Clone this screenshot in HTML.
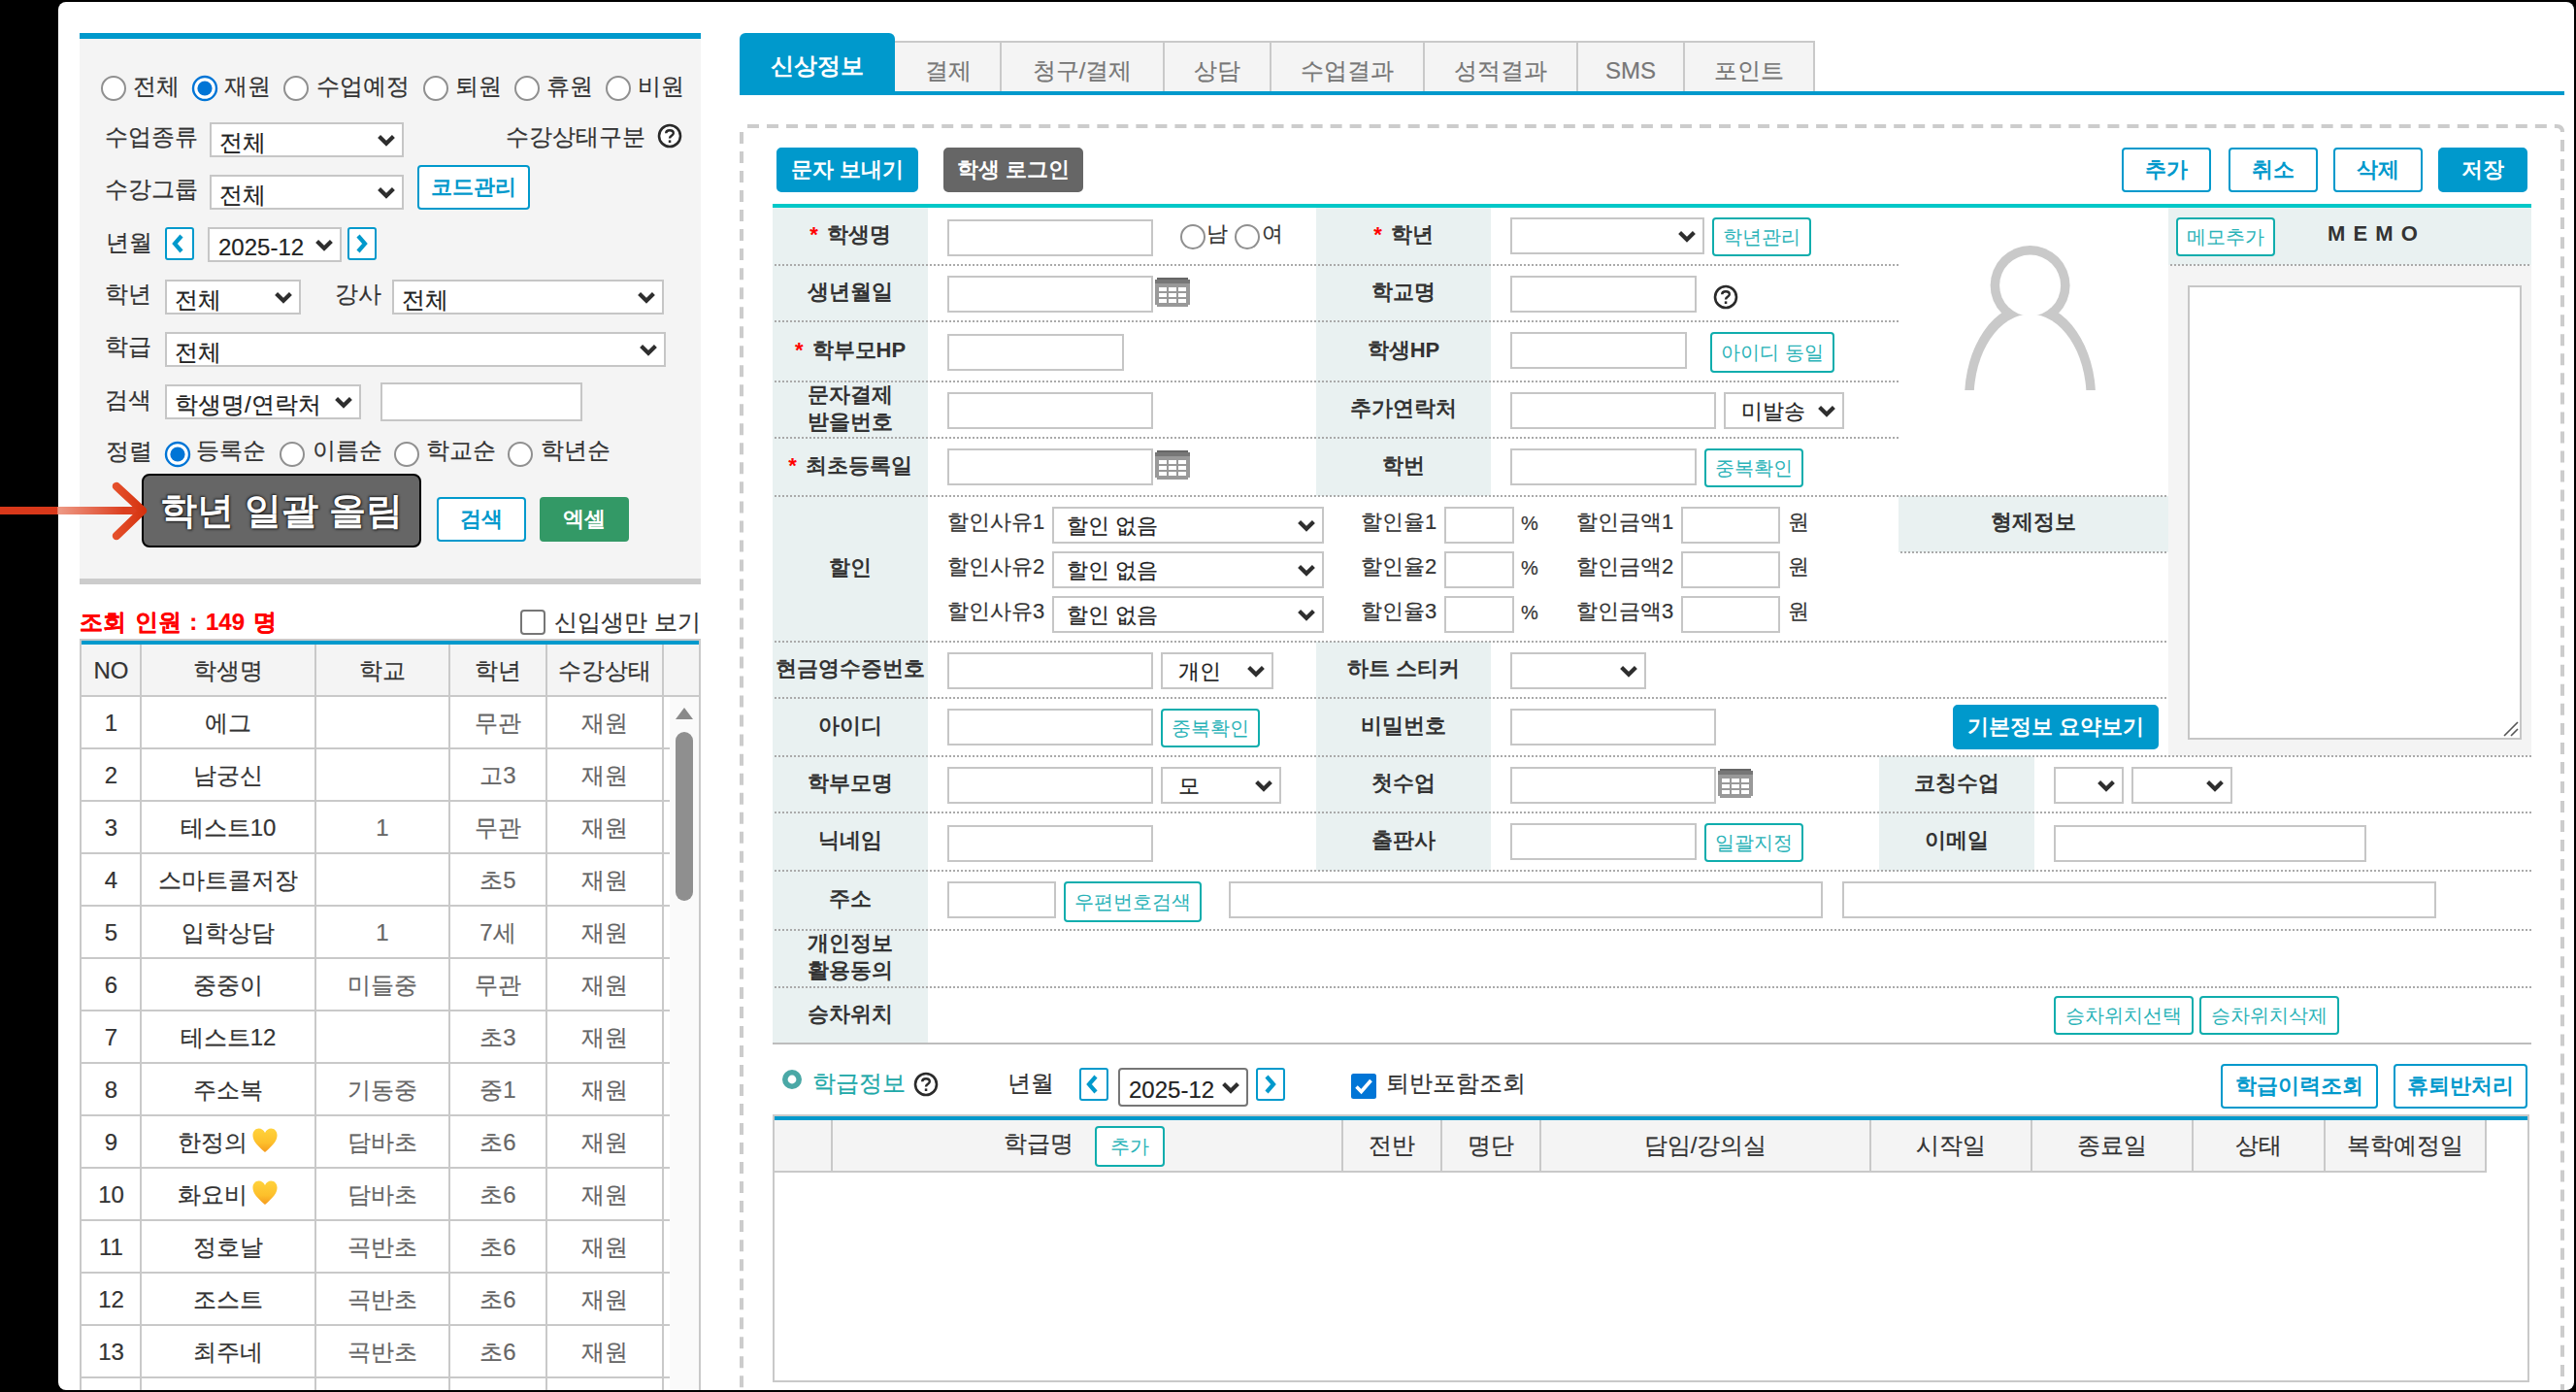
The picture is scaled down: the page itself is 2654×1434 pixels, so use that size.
<!DOCTYPE html>
<html lang="ko">
<head>
<meta charset="utf-8">
<title>학생관리</title>
<style>
html,body{margin:0;padding:0;background:#000;}
body{width:2654px;height:1434px;overflow:hidden;font-family:"Liberation Sans",sans-serif;font-size:24px;color:#333;}
#root{position:relative;width:2654px;height:1434px;overflow:hidden;background:#000;}
.a{position:absolute;box-sizing:border-box;margin:0;padding:0;}
#card{position:absolute;left:60px;top:2px;width:2592px;height:1430px;background:#fff;border-radius:8px;overflow:hidden;}
#in{position:absolute;left:-60px;top:-2px;width:2654px;height:1434px;}
.t{white-space:nowrap;text-align:center;font-size:24px;color:#333;overflow:visible;-webkit-text-stroke:0.2px currentColor;}
.b{font-weight:bold;-webkit-text-stroke:0;}
.r{font-size:22px;}
.inp{border:2px solid #c6c6c6;background:#fff;border-radius:0;outline:none;font-family:"Liberation Sans",sans-serif;}
.sel{border:2px solid #c6c6c6;background:#fff;}
.sel .st{position:absolute;white-space:nowrap;font-size:24px;color:#222;-webkit-text-stroke:0.2px currentColor;}
.sel .chev{position:absolute;right:6px;top:50%;margin-top:-6px;}
.sel.dk{border-color:#767676;border-radius:4px;}
.btn{font-family:"Liberation Sans",sans-serif;font-size:22px;font-weight:bold;text-align:center;white-space:nowrap;cursor:pointer;border-radius:4px;overflow:hidden;}
.bo{background:#fff;border:2px solid #0099cc;color:#0099cc;}
.bb{background:#0099cc;border:2px solid #0099cc;color:#fff;border-radius:5px;}
.bg{background:#666;border:2px solid #666;color:#fff;border-radius:5px;}
.bgreen{background:#339966;border:2px solid #339966;color:#fff;}
.bt{background:#fff;border:2px solid #10adad;color:#2ab3b8;font-weight:normal;border-radius:4px;font-size:20px;}
.big{background:#666;border:2px solid #000;color:#fff;font-size:38px;border-radius:8px;text-shadow:0 0 3px #222,1px 1px 2px #222,-1px -1px 2px #333;}
.nav{background:#fff;border:2px solid #0099cc;border-radius:3px;}
.lbl{background:#e9f1f1;}
.dot{background:repeating-linear-gradient(90deg,transparent 0,transparent 2px,#aaaaaa 2px,#aaaaaa 4px);}
</style>
</head>
<body>
<div id="root">
<div id="card"><div id="in">
<div class="a " style="left:82px;top:34px;width:640px;height:6px;background:#0099cc"></div>
<div class="a " style="left:82px;top:40px;width:640px;height:556px;background:#f4f4f4"></div>
<div class="a " style="left:82px;top:596px;width:640px;height:6px;background:#cccccc"></div>
<svg class="a" style="left:103px;top:77px;" width="28" height="28" viewBox="0 0 28 28"><circle cx="14" cy="14" r="12" fill="#fff" stroke="#909090" stroke-width="2"/></svg>
<div class="a t " style="left:137px;top:74px;width:120px;height:30px;line-height:30px;text-align:left;">전체</div>
<svg class="a" style="left:197px;top:77px;" width="28" height="28" viewBox="0 0 28 28"><circle cx="14" cy="14" r="12" fill="#fff" stroke="#0075d6" stroke-width="2.4"/><circle cx="14" cy="14" r="7.6" fill="#0075d6"/></svg>
<div class="a t " style="left:231px;top:74px;width:120px;height:30px;line-height:30px;text-align:left;">재원</div>
<svg class="a" style="left:291px;top:77px;" width="28" height="28" viewBox="0 0 28 28"><circle cx="14" cy="14" r="12" fill="#fff" stroke="#909090" stroke-width="2"/></svg>
<div class="a t " style="left:326px;top:74px;width:120px;height:30px;line-height:30px;text-align:left;">수업예정</div>
<svg class="a" style="left:435px;top:77px;" width="28" height="28" viewBox="0 0 28 28"><circle cx="14" cy="14" r="12" fill="#fff" stroke="#909090" stroke-width="2"/></svg>
<div class="a t " style="left:469px;top:74px;width:120px;height:30px;line-height:30px;text-align:left;">퇴원</div>
<svg class="a" style="left:529px;top:77px;" width="28" height="28" viewBox="0 0 28 28"><circle cx="14" cy="14" r="12" fill="#fff" stroke="#909090" stroke-width="2"/></svg>
<div class="a t " style="left:563px;top:74px;width:120px;height:30px;line-height:30px;text-align:left;">휴원</div>
<svg class="a" style="left:623px;top:77px;" width="28" height="28" viewBox="0 0 28 28"><circle cx="14" cy="14" r="12" fill="#fff" stroke="#909090" stroke-width="2"/></svg>
<div class="a t " style="left:657px;top:74px;width:120px;height:30px;line-height:30px;text-align:left;">비원</div>
<div class="a t " style="left:108px;top:126px;width:110px;height:30px;line-height:30px;text-align:left;">수업종류</div>
<div class="a sel " style="left:216px;top:126px;width:200px;height:36px;"><span class="st" style="left:8px;top:3px;line-height:32px;font-size:24px">전체</span><svg class="chev" width="20" height="13" viewBox="0 0 20 13"><path d="M2.6 2.6 L10 9.8 L17.4 2.6" fill="none" stroke="#2e2e2e" stroke-width="4.2" stroke-linejoin="miter"/></svg></div>
<div class="a t " style="left:521px;top:126px;width:150px;height:30px;line-height:30px;text-align:left;">수강상태구분</div>
<svg class="a" style="left:677px;top:127px;" width="26" height="26" viewBox="0 0 26 26"><circle cx="13" cy="13" r="11" fill="#fff" stroke="#2a2a2a" stroke-width="2.6"/><path d="M9.2 10.2 C9.2 6.2 16.8 6.2 16.8 10.2 C16.8 12.8 13 12.9 13 15.6" fill="none" stroke="#2a2a2a" stroke-width="2.4"/><rect x="11.8" y="17.4" width="2.5" height="2.6" fill="#2a2a2a"/></svg>
<div class="a t " style="left:108px;top:180px;width:110px;height:30px;line-height:30px;text-align:left;">수강그룹</div>
<div class="a sel " style="left:216px;top:180px;width:200px;height:36px;"><span class="st" style="left:8px;top:3px;line-height:32px;font-size:24px">전체</span><svg class="chev" width="20" height="13" viewBox="0 0 20 13"><path d="M2.6 2.6 L10 9.8 L17.4 2.6" fill="none" stroke="#2e2e2e" stroke-width="4.2" stroke-linejoin="miter"/></svg></div>
<button class="a btn bo" style="left:430px;top:170px;width:116px;height:46px;line-height:42px;">코드관리</button>
<div class="a t " style="left:109px;top:235px;width:60px;height:30px;line-height:30px;text-align:left;">년월</div>
<div class="a nav" style="left:170px;top:234px;width:30px;height:34px;"><svg width="18" height="22" viewBox="0 0 18 22" style="position:absolute;left:3px;top:4px"><path d="M12 3 L5 11 L12 19" fill="none" stroke="#0099cc" stroke-width="4.2"/></svg></div>
<div class="a sel " style="left:214px;top:234px;width:138px;height:36px;"><span class="st" style="left:9px;top:3px;line-height:32px;font-size:24px">2025-12</span><svg class="chev" width="20" height="13" viewBox="0 0 20 13"><path d="M2.6 2.6 L10 9.8 L17.4 2.6" fill="none" stroke="#2e2e2e" stroke-width="4.2" stroke-linejoin="miter"/></svg></div>
<div class="a nav" style="left:358px;top:234px;width:30px;height:34px;"><svg width="18" height="22" viewBox="0 0 18 22" style="position:absolute;left:3px;top:4px"><path d="M6 3 L13 11 L6 19" fill="none" stroke="#0099cc" stroke-width="4.2"/></svg></div>
<div class="a t " style="left:108px;top:288px;width:60px;height:30px;line-height:30px;text-align:left;">학년</div>
<div class="a sel " style="left:170px;top:288px;width:140px;height:36px;"><span class="st" style="left:8px;top:3px;line-height:32px;font-size:24px">전체</span><svg class="chev" width="20" height="13" viewBox="0 0 20 13"><path d="M2.6 2.6 L10 9.8 L17.4 2.6" fill="none" stroke="#2e2e2e" stroke-width="4.2" stroke-linejoin="miter"/></svg></div>
<div class="a t " style="left:345px;top:288px;width:60px;height:30px;line-height:30px;text-align:left;">강사</div>
<div class="a sel " style="left:404px;top:288px;width:280px;height:36px;"><span class="st" style="left:8px;top:3px;line-height:32px;font-size:24px">전체</span><svg class="chev" width="20" height="13" viewBox="0 0 20 13"><path d="M2.6 2.6 L10 9.8 L17.4 2.6" fill="none" stroke="#2e2e2e" stroke-width="4.2" stroke-linejoin="miter"/></svg></div>
<div class="a t " style="left:108px;top:342px;width:60px;height:30px;line-height:30px;text-align:left;">학급</div>
<div class="a sel " style="left:170px;top:342px;width:516px;height:36px;"><span class="st" style="left:8px;top:3px;line-height:32px;font-size:24px">전체</span><svg class="chev" width="20" height="13" viewBox="0 0 20 13"><path d="M2.6 2.6 L10 9.8 L17.4 2.6" fill="none" stroke="#2e2e2e" stroke-width="4.2" stroke-linejoin="miter"/></svg></div>
<div class="a t " style="left:108px;top:397px;width:60px;height:30px;line-height:30px;text-align:left;">검색</div>
<div class="a sel " style="left:170px;top:396px;width:202px;height:36px;"><span class="st" style="left:8px;top:3px;line-height:32px;font-size:24px">학생명/연락처</span><svg class="chev" width="20" height="13" viewBox="0 0 20 13"><path d="M2.6 2.6 L10 9.8 L17.4 2.6" fill="none" stroke="#2e2e2e" stroke-width="4.2" stroke-linejoin="miter"/></svg></div>
<input class="a inp" type="text" style="left:392px;top:394px;width:208px;height:40px;">
<div class="a t " style="left:109px;top:450px;width:60px;height:30px;line-height:30px;text-align:left;">정렬</div>
<svg class="a" style="left:169px;top:454px;" width="28" height="28" viewBox="0 0 28 28"><circle cx="14" cy="14" r="12" fill="#fff" stroke="#0075d6" stroke-width="2.4"/><circle cx="14" cy="14" r="7.6" fill="#0075d6"/></svg>
<div class="a t " style="left:202px;top:449px;width:100px;height:30px;line-height:30px;text-align:left;">등록순</div>
<svg class="a" style="left:287px;top:454px;" width="28" height="28" viewBox="0 0 28 28"><circle cx="14" cy="14" r="12" fill="#fff" stroke="#909090" stroke-width="2"/></svg>
<div class="a t " style="left:322px;top:449px;width:100px;height:30px;line-height:30px;text-align:left;">이름순</div>
<svg class="a" style="left:405px;top:454px;" width="28" height="28" viewBox="0 0 28 28"><circle cx="14" cy="14" r="12" fill="#fff" stroke="#909090" stroke-width="2"/></svg>
<div class="a t " style="left:439px;top:449px;width:100px;height:30px;line-height:30px;text-align:left;">학교순</div>
<svg class="a" style="left:522px;top:454px;" width="28" height="28" viewBox="0 0 28 28"><circle cx="14" cy="14" r="12" fill="#fff" stroke="#909090" stroke-width="2"/></svg>
<div class="a t " style="left:557px;top:449px;width:100px;height:30px;line-height:30px;text-align:left;">학년순</div>
<button class="a btn big" style="left:146px;top:488px;width:288px;height:76px;line-height:72px;">학년 일괄 올림</button>
<button class="a btn bo" style="left:450px;top:512px;width:92px;height:46px;line-height:42px;">검색</button>
<button class="a btn bgreen" style="left:556px;top:512px;width:92px;height:46px;line-height:42px;">엑셀</button>
<div class="a t " style="left:82px;top:625px;width:300px;height:32px;line-height:32px;text-align:left;color:#ff0000;font-weight:bold;word-spacing:2px;">조회 인원 : 149 명</div>
<div class="a " style="left:536px;top:628px;width:26px;height:26px;background:#fff;border:2px solid #767676;border-radius:4px"></div>
<div class="a t " style="left:571px;top:625px;width:160px;height:32px;line-height:32px;text-align:left;">신입생만 보기</div>
<div class="a " style="left:82px;top:658px;width:640px;height:780px;border:2px solid #c9c9c9;border-bottom:none;background:#fff"></div>
<div class="a " style="left:84px;top:660px;width:636px;height:4px;background:#0099cc"></div>
<div class="a " style="left:84px;top:664px;width:636px;height:52px;background:#f4f4f4"></div>
<div class="a " style="left:690px;top:718px;width:30px;height:720px;background:#fafafa"></div>
<div class="a " style="left:144px;top:664px;width:2px;height:780px;background:#c9c9c9"></div>
<div class="a " style="left:324px;top:664px;width:2px;height:780px;background:#c9c9c9"></div>
<div class="a " style="left:462px;top:664px;width:2px;height:780px;background:#c9c9c9"></div>
<div class="a " style="left:562px;top:664px;width:2px;height:780px;background:#c9c9c9"></div>
<div class="a " style="left:682px;top:664px;width:2px;height:780px;background:#c9c9c9"></div>
<div class="a " style="left:84px;top:716px;width:636px;height:2px;background:#c9c9c9"></div>
<div class="a " style="left:84px;top:770px;width:606px;height:2px;background:#c9c9c9"></div>
<div class="a " style="left:84px;top:824px;width:606px;height:2px;background:#c9c9c9"></div>
<div class="a " style="left:84px;top:878px;width:606px;height:2px;background:#c9c9c9"></div>
<div class="a " style="left:84px;top:932px;width:606px;height:2px;background:#c9c9c9"></div>
<div class="a " style="left:84px;top:986px;width:606px;height:2px;background:#c9c9c9"></div>
<div class="a " style="left:84px;top:1040px;width:606px;height:2px;background:#c9c9c9"></div>
<div class="a " style="left:84px;top:1094px;width:606px;height:2px;background:#c9c9c9"></div>
<div class="a " style="left:84px;top:1148px;width:606px;height:2px;background:#c9c9c9"></div>
<div class="a " style="left:84px;top:1202px;width:606px;height:2px;background:#c9c9c9"></div>
<div class="a " style="left:84px;top:1256px;width:606px;height:2px;background:#c9c9c9"></div>
<div class="a " style="left:84px;top:1310px;width:606px;height:2px;background:#c9c9c9"></div>
<div class="a " style="left:84px;top:1364px;width:606px;height:2px;background:#c9c9c9"></div>
<div class="a " style="left:84px;top:1418px;width:606px;height:2px;background:#c9c9c9"></div>
<div class="a t " style="left:84px;top:666px;width:61px;height:50px;line-height:50px;">NO</div>
<div class="a t " style="left:145px;top:666px;width:180px;height:50px;line-height:50px;">학생명</div>
<div class="a t " style="left:325px;top:666px;width:138px;height:50px;line-height:50px;">학교</div>
<div class="a t " style="left:463px;top:666px;width:100px;height:50px;line-height:50px;">학년</div>
<div class="a t " style="left:563px;top:666px;width:120px;height:50px;line-height:50px;">수강상태</div>
<div class="a t " style="left:84px;top:719px;width:61px;height:52px;line-height:52px;">1</div>
<div class="a t " style="left:145px;top:719px;width:180px;height:52px;line-height:52px;">에그</div>
<div class="a t " style="left:325px;top:719px;width:138px;height:52px;line-height:52px;color:#666;"></div>
<div class="a t " style="left:463px;top:719px;width:100px;height:52px;line-height:52px;color:#666;">무관</div>
<div class="a t " style="left:563px;top:719px;width:120px;height:52px;line-height:52px;color:#666;">재원</div>
<div class="a t " style="left:84px;top:773px;width:61px;height:52px;line-height:52px;">2</div>
<div class="a t " style="left:145px;top:773px;width:180px;height:52px;line-height:52px;">남궁신</div>
<div class="a t " style="left:325px;top:773px;width:138px;height:52px;line-height:52px;color:#666;"></div>
<div class="a t " style="left:463px;top:773px;width:100px;height:52px;line-height:52px;color:#666;">고3</div>
<div class="a t " style="left:563px;top:773px;width:120px;height:52px;line-height:52px;color:#666;">재원</div>
<div class="a t " style="left:84px;top:827px;width:61px;height:52px;line-height:52px;">3</div>
<div class="a t " style="left:145px;top:827px;width:180px;height:52px;line-height:52px;">테스트10</div>
<div class="a t " style="left:325px;top:827px;width:138px;height:52px;line-height:52px;color:#666;">1</div>
<div class="a t " style="left:463px;top:827px;width:100px;height:52px;line-height:52px;color:#666;">무관</div>
<div class="a t " style="left:563px;top:827px;width:120px;height:52px;line-height:52px;color:#666;">재원</div>
<div class="a t " style="left:84px;top:881px;width:61px;height:52px;line-height:52px;">4</div>
<div class="a t " style="left:145px;top:881px;width:180px;height:52px;line-height:52px;">스마트콜저장</div>
<div class="a t " style="left:325px;top:881px;width:138px;height:52px;line-height:52px;color:#666;"></div>
<div class="a t " style="left:463px;top:881px;width:100px;height:52px;line-height:52px;color:#666;">초5</div>
<div class="a t " style="left:563px;top:881px;width:120px;height:52px;line-height:52px;color:#666;">재원</div>
<div class="a t " style="left:84px;top:935px;width:61px;height:52px;line-height:52px;">5</div>
<div class="a t " style="left:145px;top:935px;width:180px;height:52px;line-height:52px;">입학상담</div>
<div class="a t " style="left:325px;top:935px;width:138px;height:52px;line-height:52px;color:#666;">1</div>
<div class="a t " style="left:463px;top:935px;width:100px;height:52px;line-height:52px;color:#666;">7세</div>
<div class="a t " style="left:563px;top:935px;width:120px;height:52px;line-height:52px;color:#666;">재원</div>
<div class="a t " style="left:84px;top:989px;width:61px;height:52px;line-height:52px;">6</div>
<div class="a t " style="left:145px;top:989px;width:180px;height:52px;line-height:52px;">중중이</div>
<div class="a t " style="left:325px;top:989px;width:138px;height:52px;line-height:52px;color:#666;">미들중</div>
<div class="a t " style="left:463px;top:989px;width:100px;height:52px;line-height:52px;color:#666;">무관</div>
<div class="a t " style="left:563px;top:989px;width:120px;height:52px;line-height:52px;color:#666;">재원</div>
<div class="a t " style="left:84px;top:1043px;width:61px;height:52px;line-height:52px;">7</div>
<div class="a t " style="left:145px;top:1043px;width:180px;height:52px;line-height:52px;">테스트12</div>
<div class="a t " style="left:325px;top:1043px;width:138px;height:52px;line-height:52px;color:#666;"></div>
<div class="a t " style="left:463px;top:1043px;width:100px;height:52px;line-height:52px;color:#666;">초3</div>
<div class="a t " style="left:563px;top:1043px;width:120px;height:52px;line-height:52px;color:#666;">재원</div>
<div class="a t " style="left:84px;top:1097px;width:61px;height:52px;line-height:52px;">8</div>
<div class="a t " style="left:145px;top:1097px;width:180px;height:52px;line-height:52px;">주소복</div>
<div class="a t " style="left:325px;top:1097px;width:138px;height:52px;line-height:52px;color:#666;">기동중</div>
<div class="a t " style="left:463px;top:1097px;width:100px;height:52px;line-height:52px;color:#666;">중1</div>
<div class="a t " style="left:563px;top:1097px;width:120px;height:52px;line-height:52px;color:#666;">재원</div>
<div class="a t " style="left:84px;top:1151px;width:61px;height:52px;line-height:52px;">9</div>
<div class="a t " style="left:183px;top:1151px;width:156px;height:52px;line-height:52px;text-align:left;">한정의</div>
<svg class="a" style="left:260px;top:1162px;" width="26" height="26" viewBox="0 0 28 26" preserveAspectRatio="none"><defs><linearGradient id="hg" x1="0" y1="0" x2="0" y2="1"><stop offset="0" stop-color="#ffd23c"/><stop offset="0.6" stop-color="#fdc02b"/><stop offset="1" stop-color="#f59a1e"/></linearGradient></defs><path d="M14 25 C4 17 0.5 12.5 0.5 7.5 C0.5 3.4 3.6 0.6 7.2 0.6 C10 0.6 12.6 2.2 14 5 C15.4 2.2 18 0.6 20.8 0.6 C24.4 0.6 27.5 3.4 27.5 7.5 C27.5 12.5 24 17 14 25 Z" fill="url(#hg)"/></svg>
<div class="a t " style="left:325px;top:1151px;width:138px;height:52px;line-height:52px;color:#666;">담바초</div>
<div class="a t " style="left:463px;top:1151px;width:100px;height:52px;line-height:52px;color:#666;">초6</div>
<div class="a t " style="left:563px;top:1151px;width:120px;height:52px;line-height:52px;color:#666;">재원</div>
<div class="a t " style="left:84px;top:1205px;width:61px;height:52px;line-height:52px;">10</div>
<div class="a t " style="left:183px;top:1205px;width:156px;height:52px;line-height:52px;text-align:left;">화요비</div>
<svg class="a" style="left:260px;top:1216px;" width="26" height="26" viewBox="0 0 28 26" preserveAspectRatio="none"><defs><linearGradient id="hg" x1="0" y1="0" x2="0" y2="1"><stop offset="0" stop-color="#ffd23c"/><stop offset="0.6" stop-color="#fdc02b"/><stop offset="1" stop-color="#f59a1e"/></linearGradient></defs><path d="M14 25 C4 17 0.5 12.5 0.5 7.5 C0.5 3.4 3.6 0.6 7.2 0.6 C10 0.6 12.6 2.2 14 5 C15.4 2.2 18 0.6 20.8 0.6 C24.4 0.6 27.5 3.4 27.5 7.5 C27.5 12.5 24 17 14 25 Z" fill="url(#hg)"/></svg>
<div class="a t " style="left:325px;top:1205px;width:138px;height:52px;line-height:52px;color:#666;">담바초</div>
<div class="a t " style="left:463px;top:1205px;width:100px;height:52px;line-height:52px;color:#666;">초6</div>
<div class="a t " style="left:563px;top:1205px;width:120px;height:52px;line-height:52px;color:#666;">재원</div>
<div class="a t " style="left:84px;top:1259px;width:61px;height:52px;line-height:52px;">11</div>
<div class="a t " style="left:145px;top:1259px;width:180px;height:52px;line-height:52px;">정호날</div>
<div class="a t " style="left:325px;top:1259px;width:138px;height:52px;line-height:52px;color:#666;">곡반초</div>
<div class="a t " style="left:463px;top:1259px;width:100px;height:52px;line-height:52px;color:#666;">초6</div>
<div class="a t " style="left:563px;top:1259px;width:120px;height:52px;line-height:52px;color:#666;">재원</div>
<div class="a t " style="left:84px;top:1313px;width:61px;height:52px;line-height:52px;">12</div>
<div class="a t " style="left:145px;top:1313px;width:180px;height:52px;line-height:52px;">조스트</div>
<div class="a t " style="left:325px;top:1313px;width:138px;height:52px;line-height:52px;color:#666;">곡반초</div>
<div class="a t " style="left:463px;top:1313px;width:100px;height:52px;line-height:52px;color:#666;">초6</div>
<div class="a t " style="left:563px;top:1313px;width:120px;height:52px;line-height:52px;color:#666;">재원</div>
<div class="a t " style="left:84px;top:1367px;width:61px;height:52px;line-height:52px;">13</div>
<div class="a t " style="left:145px;top:1367px;width:180px;height:52px;line-height:52px;">최주네</div>
<div class="a t " style="left:325px;top:1367px;width:138px;height:52px;line-height:52px;color:#666;">곡반초</div>
<div class="a t " style="left:463px;top:1367px;width:100px;height:52px;line-height:52px;color:#666;">초6</div>
<div class="a t " style="left:563px;top:1367px;width:120px;height:52px;line-height:52px;color:#666;">재원</div>
<svg class="a" style="left:695px;top:728px" width="20" height="14" viewBox="0 0 20 14"><path d="M10 1 L19 13 L1 13 Z" fill="#8a8a8a"/></svg>
<div class="a " style="left:696px;top:754px;width:18px;height:174px;background:#8f8f8f;border-radius:9px"></div>
<div class="a " style="left:922px;top:42px;width:948px;height:54px;background:#f4f4f4;border-top:2px solid #c9c9c9;border-right:2px solid #c9c9c9"></div>
<div class="a " style="left:1030px;top:44px;width:2px;height:50px;background:#c9c9c9"></div>
<div class="a t " style="left:922px;top:48px;width:109px;height:50px;line-height:50px;color:#777;">결제</div>
<div class="a " style="left:1198px;top:44px;width:2px;height:50px;background:#c9c9c9"></div>
<div class="a t " style="left:1031px;top:48px;width:168px;height:50px;line-height:50px;color:#777;">청구/결제</div>
<div class="a " style="left:1308px;top:44px;width:2px;height:50px;background:#c9c9c9"></div>
<div class="a t " style="left:1199px;top:48px;width:110px;height:50px;line-height:50px;color:#777;">상담</div>
<div class="a " style="left:1466px;top:44px;width:2px;height:50px;background:#c9c9c9"></div>
<div class="a t " style="left:1309px;top:48px;width:158px;height:50px;line-height:50px;color:#777;">수업결과</div>
<div class="a " style="left:1624px;top:44px;width:2px;height:50px;background:#c9c9c9"></div>
<div class="a t " style="left:1467px;top:48px;width:158px;height:50px;line-height:50px;color:#777;">성적결과</div>
<div class="a " style="left:1734px;top:44px;width:2px;height:50px;background:#c9c9c9"></div>
<div class="a t " style="left:1625px;top:48px;width:110px;height:50px;line-height:50px;color:#777;">SMS</div>
<div class="a t " style="left:1735px;top:48px;width:134px;height:50px;line-height:50px;color:#777;">포인트</div>
<div class="a " style="left:762px;top:94px;width:1880px;height:4px;background:#0099cc"></div>
<div class="a " style="left:762px;top:34px;width:160px;height:64px;background:#0099cc;border-radius:6px 6px 0 0"></div>
<div class="a t b" style="left:762px;top:38px;width:160px;height:60px;line-height:60px;color:#fff;">신상정보</div>
<svg class="a" style="left:760px;top:126px" width="1890" height="1310" viewBox="760 126 1890 1310"><g fill="none" stroke="#cccccc" stroke-width="4"><path d="M770 130 H2632" stroke-dasharray="12 8.02"/><path d="M764 136 V1440" stroke-dasharray="12 8.02"/><path d="M2640 144 V1440" stroke-dasharray="12 8.03"/><path d="M2632 130 H2634 Q2640 130 2640 136"/></g></svg>
<button class="a btn bb" style="left:800px;top:152px;width:146px;height:46px;line-height:42px;">문자 보내기</button>
<button class="a btn bg" style="left:972px;top:152px;width:144px;height:46px;line-height:42px;">학생 로그인</button>
<button class="a btn bo" style="left:2186px;top:152px;width:92px;height:46px;line-height:42px;">추가</button>
<button class="a btn bo" style="left:2296px;top:152px;width:92px;height:46px;line-height:42px;">취소</button>
<button class="a btn bo" style="left:2404px;top:152px;width:92px;height:46px;line-height:42px;">삭제</button>
<button class="a btn bb" style="left:2512px;top:152px;width:92px;height:46px;line-height:42px;">저장</button>
<div class="a " style="left:796px;top:210px;width:1812px;height:4px;background:#00c8c8"></div>
<div class="a lbl" style="left:796px;top:214px;width:160px;height:861px;"></div>
<div class="a lbl" style="left:1356px;top:214px;width:180px;height:297px;"></div>
<div class="a lbl" style="left:1356px;top:661px;width:180px;height:236px;"></div>
<div class="a lbl" style="left:1936px;top:779px;width:160px;height:118px;"></div>
<div class="a lbl" style="left:1956px;top:511px;width:278px;height:58px;"></div>
<div class="a lbl" style="left:2234px;top:214px;width:374px;height:59px;"></div>
<div class="a " style="left:2234px;top:273px;width:374px;height:506px;background:#f4f4f4"></div>
<div class="a dot" style="left:796px;top:272px;width:1160px;height:2px;"></div>
<div class="a dot" style="left:796px;top:330px;width:1160px;height:2px;"></div>
<div class="a dot" style="left:796px;top:392px;width:1160px;height:2px;"></div>
<div class="a dot" style="left:796px;top:450px;width:1160px;height:2px;"></div>
<div class="a dot" style="left:2234px;top:272px;width:374px;height:2px;"></div>
<div class="a dot" style="left:796px;top:510px;width:1438px;height:2px;"></div>
<div class="a dot" style="left:1956px;top:568px;width:278px;height:2px;"></div>
<div class="a dot" style="left:796px;top:660px;width:1438px;height:2px;"></div>
<div class="a dot" style="left:796px;top:718px;width:1438px;height:2px;"></div>
<div class="a dot" style="left:796px;top:778px;width:1812px;height:2px;"></div>
<div class="a dot" style="left:796px;top:836px;width:1812px;height:2px;"></div>
<div class="a dot" style="left:796px;top:896px;width:1812px;height:2px;"></div>
<div class="a dot" style="left:796px;top:957px;width:1812px;height:2px;"></div>
<div class="a dot" style="left:796px;top:1016px;width:1812px;height:2px;"></div>
<div class="a " style="left:796px;top:1074px;width:1812px;height:2px;background:#bdbdbd"></div>
<div class="a t b r" style="left:796px;top:214px;width:160px;height:56px;line-height:56px;"><span style="color:#ff0000;margin-right:3px">*</span> 학생명</div>
<input class="a inp" type="text" style="left:976px;top:226px;width:212px;height:38px;">
<svg class="a" style="left:1215px;top:230px;" width="28" height="28" viewBox="0 0 28 28"><circle cx="14" cy="14" r="12" fill="#fff" stroke="#909090" stroke-width="2"/></svg>
<div class="a t " style="left:1243px;top:227px;width:30px;height:28px;line-height:28px;text-align:left;font-size:22px;">남</div>
<svg class="a" style="left:1271px;top:230px;" width="28" height="28" viewBox="0 0 28 28"><circle cx="14" cy="14" r="12" fill="#fff" stroke="#909090" stroke-width="2"/></svg>
<div class="a t " style="left:1300px;top:227px;width:30px;height:28px;line-height:28px;text-align:left;font-size:22px;">여</div>
<div class="a t b r" style="left:1356px;top:214px;width:180px;height:56px;line-height:56px;"><span style="color:#ff0000;margin-right:3px">*</span> 학년</div>
<div class="a sel " style="left:1556px;top:224px;width:200px;height:38px;"><svg class="chev" width="20" height="13" viewBox="0 0 20 13"><path d="M2.6 2.6 L10 9.8 L17.4 2.6" fill="none" stroke="#2e2e2e" stroke-width="4.2" stroke-linejoin="miter"/></svg></div>
<button class="a btn bt" style="left:1764px;top:224px;width:102px;height:40px;line-height:36px;">학년관리</button>
<div class="a t b r" style="left:796px;top:273px;width:160px;height:55px;line-height:55px;">생년월일</div>
<input class="a inp" type="text" style="left:976px;top:284px;width:212px;height:38px;">
<svg class="a" style="left:1190px;top:286px;" width="36" height="30" viewBox="0 0 36 30" shape-rendering="crispEdges"><rect x="2" y="0" width="32" height="2" fill="#666"/><rect x="0" y="2" width="36" height="4" fill="#777"/><rect x="0" y="6" width="36" height="22" fill="#999"/><rect x="2" y="28" width="32" height="2" fill="#999"/><rect x="4" y="10" width="8" height="4" fill="#fff"/><rect x="14" y="10" width="8" height="4" fill="#fff"/><rect x="24" y="10" width="8" height="4" fill="#fff"/><rect x="4" y="16" width="8" height="4" fill="#fff"/><rect x="14" y="16" width="8" height="4" fill="#fff"/><rect x="24" y="16" width="8" height="4" fill="#fff"/><rect x="4" y="22" width="8" height="4" fill="#fff"/><rect x="14" y="22" width="8" height="4" fill="#fff"/><rect x="24" y="22" width="8" height="4" fill="#fff"/></svg>
<div class="a t b r" style="left:1356px;top:273px;width:180px;height:55px;line-height:55px;">학교명</div>
<input class="a inp" type="text" style="left:1556px;top:284px;width:192px;height:38px;">
<svg class="a" style="left:1765px;top:293px;" width="26" height="26" viewBox="0 0 26 26"><circle cx="13" cy="13" r="11" fill="#fff" stroke="#2a2a2a" stroke-width="2.6"/><path d="M9.2 10.2 C9.2 6.2 16.8 6.2 16.8 10.2 C16.8 12.8 13 12.9 13 15.6" fill="none" stroke="#2a2a2a" stroke-width="2.4"/><rect x="11.8" y="17.4" width="2.5" height="2.6" fill="#2a2a2a"/></svg>
<div class="a t b r" style="left:796px;top:331px;width:160px;height:59px;line-height:59px;"><span style="color:#ff0000;margin-right:3px">*</span> 학부모HP</div>
<input class="a inp" type="text" style="left:976px;top:344px;width:182px;height:38px;">
<div class="a t b r" style="left:1356px;top:331px;width:180px;height:59px;line-height:59px;">학생HP</div>
<input class="a inp" type="text" style="left:1556px;top:342px;width:182px;height:38px;">
<button class="a btn bt" style="left:1762px;top:342px;width:128px;height:42px;line-height:38px;">아이디 동일</button>
<div class="a t b r" style="left:796px;top:393px;width:160px;height:28px;line-height:28px;">문자결제</div>
<div class="a t b r" style="left:796px;top:421px;width:160px;height:28px;line-height:28px;">받을번호</div>
<input class="a inp" type="text" style="left:976px;top:404px;width:212px;height:38px;">
<div class="a t b r" style="left:1356px;top:393px;width:180px;height:55px;line-height:55px;">추가연락처</div>
<input class="a inp" type="text" style="left:1556px;top:404px;width:212px;height:38px;">
<div class="a sel " style="left:1776px;top:404px;width:124px;height:38px;"><span class="st" style="left:16px;top:1px;line-height:34px;font-size:22px">미발송</span><svg class="chev" width="20" height="13" viewBox="0 0 20 13"><path d="M2.6 2.6 L10 9.8 L17.4 2.6" fill="none" stroke="#2e2e2e" stroke-width="4.2" stroke-linejoin="miter"/></svg></div>
<div class="a t b r" style="left:796px;top:451px;width:160px;height:57px;line-height:57px;"><span style="color:#ff0000;margin-right:3px">*</span> 최초등록일</div>
<input class="a inp" type="text" style="left:976px;top:462px;width:212px;height:38px;">
<svg class="a" style="left:1190px;top:464px;" width="36" height="30" viewBox="0 0 36 30" shape-rendering="crispEdges"><rect x="2" y="0" width="32" height="2" fill="#666"/><rect x="0" y="2" width="36" height="4" fill="#777"/><rect x="0" y="6" width="36" height="22" fill="#999"/><rect x="2" y="28" width="32" height="2" fill="#999"/><rect x="4" y="10" width="8" height="4" fill="#fff"/><rect x="14" y="10" width="8" height="4" fill="#fff"/><rect x="24" y="10" width="8" height="4" fill="#fff"/><rect x="4" y="16" width="8" height="4" fill="#fff"/><rect x="14" y="16" width="8" height="4" fill="#fff"/><rect x="24" y="16" width="8" height="4" fill="#fff"/><rect x="4" y="22" width="8" height="4" fill="#fff"/><rect x="14" y="22" width="8" height="4" fill="#fff"/><rect x="24" y="22" width="8" height="4" fill="#fff"/></svg>
<div class="a t b r" style="left:1356px;top:451px;width:180px;height:57px;line-height:57px;">학번</div>
<input class="a inp" type="text" style="left:1556px;top:462px;width:192px;height:38px;">
<button class="a btn bt" style="left:1756px;top:462px;width:102px;height:40px;line-height:36px;">중복확인</button>
<div class="a t b r" style="left:796px;top:511px;width:160px;height:147px;line-height:147px;">할인</div>
<div class="a t r" style="left:976px;top:522px;width:110px;height:32px;line-height:32px;text-align:left;">할인사유1</div>
<div class="a sel " style="left:1084px;top:522px;width:280px;height:38px;"><span class="st" style="left:13px;top:1px;line-height:34px;font-size:22px">할인 없음</span><svg class="chev" width="20" height="13" viewBox="0 0 20 13"><path d="M2.6 2.6 L10 9.8 L17.4 2.6" fill="none" stroke="#2e2e2e" stroke-width="4.2" stroke-linejoin="miter"/></svg></div>
<div class="a t r" style="left:1402px;top:522px;width:90px;height:32px;line-height:32px;text-align:left;">할인율1</div>
<input class="a inp" type="text" style="left:1488px;top:522px;width:72px;height:38px;">
<div class="a t " style="left:1567px;top:522px;width:24px;height:34px;line-height:34px;text-align:left;font-size:20px;">%</div>
<div class="a t r" style="left:1624px;top:522px;width:110px;height:32px;line-height:32px;text-align:left;">할인금액1</div>
<input class="a inp" type="text" style="left:1732px;top:522px;width:102px;height:38px;">
<div class="a t " style="left:1842px;top:522px;width:30px;height:32px;line-height:32px;text-align:left;font-size:22px;">원</div>
<div class="a t r" style="left:976px;top:568px;width:110px;height:32px;line-height:32px;text-align:left;">할인사유2</div>
<div class="a sel " style="left:1084px;top:568px;width:280px;height:38px;"><span class="st" style="left:13px;top:1px;line-height:34px;font-size:22px">할인 없음</span><svg class="chev" width="20" height="13" viewBox="0 0 20 13"><path d="M2.6 2.6 L10 9.8 L17.4 2.6" fill="none" stroke="#2e2e2e" stroke-width="4.2" stroke-linejoin="miter"/></svg></div>
<div class="a t r" style="left:1402px;top:568px;width:90px;height:32px;line-height:32px;text-align:left;">할인율2</div>
<input class="a inp" type="text" style="left:1488px;top:568px;width:72px;height:38px;">
<div class="a t " style="left:1567px;top:568px;width:24px;height:34px;line-height:34px;text-align:left;font-size:20px;">%</div>
<div class="a t r" style="left:1624px;top:568px;width:110px;height:32px;line-height:32px;text-align:left;">할인금액2</div>
<input class="a inp" type="text" style="left:1732px;top:568px;width:102px;height:38px;">
<div class="a t " style="left:1842px;top:568px;width:30px;height:32px;line-height:32px;text-align:left;font-size:22px;">원</div>
<div class="a t r" style="left:976px;top:614px;width:110px;height:32px;line-height:32px;text-align:left;">할인사유3</div>
<div class="a sel " style="left:1084px;top:614px;width:280px;height:38px;"><span class="st" style="left:13px;top:1px;line-height:34px;font-size:22px">할인 없음</span><svg class="chev" width="20" height="13" viewBox="0 0 20 13"><path d="M2.6 2.6 L10 9.8 L17.4 2.6" fill="none" stroke="#2e2e2e" stroke-width="4.2" stroke-linejoin="miter"/></svg></div>
<div class="a t r" style="left:1402px;top:614px;width:90px;height:32px;line-height:32px;text-align:left;">할인율3</div>
<input class="a inp" type="text" style="left:1488px;top:614px;width:72px;height:38px;">
<div class="a t " style="left:1567px;top:614px;width:24px;height:34px;line-height:34px;text-align:left;font-size:20px;">%</div>
<div class="a t r" style="left:1624px;top:614px;width:110px;height:32px;line-height:32px;text-align:left;">할인금액3</div>
<input class="a inp" type="text" style="left:1732px;top:614px;width:102px;height:38px;">
<div class="a t " style="left:1842px;top:614px;width:30px;height:32px;line-height:32px;text-align:left;font-size:22px;">원</div>
<div class="a t b r" style="left:1956px;top:511px;width:278px;height:54px;line-height:54px;">형제정보</div>
<div class="a t b r" style="left:796px;top:661px;width:160px;height:55px;line-height:55px;">현금영수증번호</div>
<input class="a inp" type="text" style="left:976px;top:672px;width:212px;height:38px;">
<div class="a sel " style="left:1196px;top:672px;width:116px;height:38px;"><span class="st" style="left:16px;top:1px;line-height:34px;font-size:22px">개인</span><svg class="chev" width="20" height="13" viewBox="0 0 20 13"><path d="M2.6 2.6 L10 9.8 L17.4 2.6" fill="none" stroke="#2e2e2e" stroke-width="4.2" stroke-linejoin="miter"/></svg></div>
<div class="a t b r" style="left:1356px;top:661px;width:180px;height:55px;line-height:55px;">하트 스티커</div>
<div class="a sel " style="left:1556px;top:672px;width:140px;height:38px;"><svg class="chev" width="20" height="13" viewBox="0 0 20 13"><path d="M2.6 2.6 L10 9.8 L17.4 2.6" fill="none" stroke="#2e2e2e" stroke-width="4.2" stroke-linejoin="miter"/></svg></div>
<div class="a t b r" style="left:796px;top:719px;width:160px;height:57px;line-height:57px;">아이디</div>
<input class="a inp" type="text" style="left:976px;top:730px;width:212px;height:38px;">
<button class="a btn bt" style="left:1196px;top:730px;width:102px;height:40px;line-height:36px;">중복확인</button>
<div class="a t b r" style="left:1356px;top:719px;width:180px;height:57px;line-height:57px;">비밀번호</div>
<input class="a inp" type="text" style="left:1556px;top:730px;width:212px;height:38px;">
<button class="a btn bb" style="left:2012px;top:726px;width:212px;height:46px;line-height:42px;">기본정보 요약보기</button>
<div class="a t b r" style="left:796px;top:779px;width:160px;height:55px;line-height:55px;">학부모명</div>
<input class="a inp" type="text" style="left:976px;top:790px;width:212px;height:38px;">
<div class="a sel " style="left:1196px;top:790px;width:124px;height:38px;"><span class="st" style="left:16px;top:1px;line-height:34px;font-size:22px">모</span><svg class="chev" width="20" height="13" viewBox="0 0 20 13"><path d="M2.6 2.6 L10 9.8 L17.4 2.6" fill="none" stroke="#2e2e2e" stroke-width="4.2" stroke-linejoin="miter"/></svg></div>
<div class="a t b r" style="left:1356px;top:779px;width:180px;height:55px;line-height:55px;">첫수업</div>
<input class="a inp" type="text" style="left:1556px;top:790px;width:212px;height:38px;">
<svg class="a" style="left:1770px;top:792px;" width="36" height="30" viewBox="0 0 36 30" shape-rendering="crispEdges"><rect x="2" y="0" width="32" height="2" fill="#666"/><rect x="0" y="2" width="36" height="4" fill="#777"/><rect x="0" y="6" width="36" height="22" fill="#999"/><rect x="2" y="28" width="32" height="2" fill="#999"/><rect x="4" y="10" width="8" height="4" fill="#fff"/><rect x="14" y="10" width="8" height="4" fill="#fff"/><rect x="24" y="10" width="8" height="4" fill="#fff"/><rect x="4" y="16" width="8" height="4" fill="#fff"/><rect x="14" y="16" width="8" height="4" fill="#fff"/><rect x="24" y="16" width="8" height="4" fill="#fff"/><rect x="4" y="22" width="8" height="4" fill="#fff"/><rect x="14" y="22" width="8" height="4" fill="#fff"/><rect x="24" y="22" width="8" height="4" fill="#fff"/></svg>
<div class="a t b r" style="left:1936px;top:779px;width:160px;height:55px;line-height:55px;">코칭수업</div>
<div class="a sel " style="left:2116px;top:790px;width:72px;height:38px;"><svg class="chev" width="20" height="13" viewBox="0 0 20 13"><path d="M2.6 2.6 L10 9.8 L17.4 2.6" fill="none" stroke="#2e2e2e" stroke-width="4.2" stroke-linejoin="miter"/></svg></div>
<div class="a sel " style="left:2196px;top:790px;width:104px;height:38px;"><svg class="chev" width="20" height="13" viewBox="0 0 20 13"><path d="M2.6 2.6 L10 9.8 L17.4 2.6" fill="none" stroke="#2e2e2e" stroke-width="4.2" stroke-linejoin="miter"/></svg></div>
<div class="a t b r" style="left:796px;top:837px;width:160px;height:57px;line-height:57px;">닉네임</div>
<input class="a inp" type="text" style="left:976px;top:850px;width:212px;height:38px;">
<div class="a t b r" style="left:1356px;top:837px;width:180px;height:57px;line-height:57px;">출판사</div>
<input class="a inp" type="text" style="left:1556px;top:848px;width:192px;height:38px;">
<button class="a btn bt" style="left:1756px;top:848px;width:102px;height:40px;line-height:36px;">일괄지정</button>
<div class="a t b r" style="left:1936px;top:837px;width:160px;height:57px;line-height:57px;">이메일</div>
<input class="a inp" type="text" style="left:2116px;top:850px;width:322px;height:38px;">
<div class="a t b r" style="left:796px;top:897px;width:160px;height:58px;line-height:58px;">주소</div>
<input class="a inp" type="text" style="left:976px;top:908px;width:112px;height:38px;">
<button class="a btn bt" style="left:1096px;top:908px;width:142px;height:42px;line-height:38px;">우편번호검색</button>
<input class="a inp" type="text" style="left:1266px;top:908px;width:612px;height:38px;">
<input class="a inp" type="text" style="left:1898px;top:908px;width:612px;height:38px;">
<div class="a t b r" style="left:796px;top:958px;width:160px;height:28px;line-height:28px;">개인정보</div>
<div class="a t b r" style="left:796px;top:986px;width:160px;height:28px;line-height:28px;">활용동의</div>
<div class="a t b r" style="left:796px;top:1017px;width:160px;height:55px;line-height:55px;">승차위치</div>
<button class="a btn bt" style="left:2116px;top:1026px;width:144px;height:40px;line-height:36px;">승차위치선택</button>
<button class="a btn bt" style="left:2266px;top:1026px;width:144px;height:40px;line-height:36px;">승차위치삭제</button>
<svg class="a" style="left:2010px;top:240px;overflow:hidden" width="164" height="162" viewBox="0 0 164 162"><g fill="#c9c9c9"><circle cx="81.6" cy="54.1" r="41"/><ellipse cx="81.6" cy="170" rx="67.5" ry="97.3"/></g><g fill="#fff"><circle cx="81.6" cy="54.1" r="31.5"/><ellipse cx="81.6" cy="170" rx="58" ry="86.4"/></g></svg>
<button class="a btn bt" style="left:2242px;top:224px;width:102px;height:40px;line-height:36px;">메모추가</button>
<div class="a t b" style="left:2385px;top:224px;width:120px;height:34px;line-height:34px;font-size:22px;letter-spacing:1px;">M E M O</div>
<div class="a " style="left:2254px;top:294px;width:344px;height:468px;background:#fff;border:2px solid #c6c6c6"></div>
<svg class="a" style="left:2578px;top:742px" width="18" height="18" viewBox="0 0 18 18"><path d="M2 16 L16 2 M9 16 L16 9" stroke="#555" stroke-width="1.6" fill="none"/></svg>
<svg class="a" style="left:804px;top:1100px" width="24" height="24" viewBox="0 0 24 24"><circle cx="12" cy="12" r="7.2" fill="#fff" stroke="#4aa8a6" stroke-width="5.6"/></svg>
<div class="a t " style="left:837px;top:1100px;width:100px;height:32px;line-height:32px;text-align:left;color:#1fa9a9;">학급정보</div>
<svg class="a" style="left:941px;top:1104px;" width="26" height="26" viewBox="0 0 26 26"><circle cx="13" cy="13" r="11" fill="#fff" stroke="#2a2a2a" stroke-width="2.6"/><path d="M9.2 10.2 C9.2 6.2 16.8 6.2 16.8 10.2 C16.8 12.8 13 12.9 13 15.6" fill="none" stroke="#2a2a2a" stroke-width="2.4"/><rect x="11.8" y="17.4" width="2.5" height="2.6" fill="#2a2a2a"/></svg>
<div class="a t " style="left:1038px;top:1100px;width:60px;height:32px;line-height:32px;text-align:left;">년월</div>
<div class="a nav" style="left:1112px;top:1100px;width:30px;height:34px;"><svg width="18" height="22" viewBox="0 0 18 22" style="position:absolute;left:3px;top:4px"><path d="M12 3 L5 11 L12 19" fill="none" stroke="#0099cc" stroke-width="4.2"/></svg></div>
<div class="a sel dk" style="left:1152px;top:1100px;width:134px;height:40px;"><span class="st" style="left:9px;top:3px;line-height:36px;font-size:24px">2025-12</span><svg class="chev" width="20" height="13" viewBox="0 0 20 13"><path d="M2.6 2.6 L10 9.8 L17.4 2.6" fill="none" stroke="#2e2e2e" stroke-width="4.2" stroke-linejoin="miter"/></svg></div>
<div class="a nav" style="left:1294px;top:1100px;width:30px;height:34px;"><svg width="18" height="22" viewBox="0 0 18 22" style="position:absolute;left:3px;top:4px"><path d="M6 3 L13 11 L6 19" fill="none" stroke="#0099cc" stroke-width="4.2"/></svg></div>
<svg class="a" style="left:1392px;top:1106px" width="26" height="26" viewBox="0 0 26 26"><rect x="0" y="0" width="26" height="26" rx="2.5" fill="#0075d6"/><path d="M5.5 13.5 L10.5 18.5 L20.5 7" fill="none" stroke="#fff" stroke-width="3.6"/></svg>
<div class="a t " style="left:1428px;top:1100px;width:160px;height:32px;line-height:32px;text-align:left;">퇴반포함조회</div>
<button class="a btn bo" style="left:2288px;top:1096px;width:162px;height:46px;line-height:42px;">학급이력조회</button>
<button class="a btn bo" style="left:2466px;top:1096px;width:138px;height:46px;line-height:42px;">휴퇴반처리</button>
<div class="a " style="left:796px;top:1148px;width:1810px;height:276px;background:#fff;border:2px solid #c9c9c9"></div>
<div class="a " style="left:798px;top:1150px;width:1806px;height:4px;background:#0099cc"></div>
<div class="a " style="left:798px;top:1154px;width:1764px;height:52px;background:#f4f4f4"></div>
<div class="a " style="left:798px;top:1206px;width:1764px;height:2px;background:#c9c9c9"></div>
<div class="a " style="left:856px;top:1154px;width:2px;height:54px;background:#c9c9c9"></div>
<div class="a " style="left:1382px;top:1154px;width:2px;height:54px;background:#c9c9c9"></div>
<div class="a " style="left:1484px;top:1154px;width:2px;height:54px;background:#c9c9c9"></div>
<div class="a " style="left:1586px;top:1154px;width:2px;height:54px;background:#c9c9c9"></div>
<div class="a " style="left:1926px;top:1154px;width:2px;height:54px;background:#c9c9c9"></div>
<div class="a " style="left:2092px;top:1154px;width:2px;height:54px;background:#c9c9c9"></div>
<div class="a " style="left:2258px;top:1154px;width:2px;height:54px;background:#c9c9c9"></div>
<div class="a " style="left:2394px;top:1154px;width:2px;height:54px;background:#c9c9c9"></div>
<div class="a " style="left:2560px;top:1154px;width:2px;height:54px;background:#c9c9c9"></div>
<div class="a t " style="left:1030px;top:1152px;width:80px;height:52px;line-height:52px;">학급명</div>
<button class="a btn bt" style="left:1128px;top:1160px;width:72px;height:42px;line-height:38px;">추가</button>
<div class="a t " style="left:1383px;top:1154px;width:102px;height:52px;line-height:52px;">전반</div>
<div class="a t " style="left:1485px;top:1154px;width:102px;height:52px;line-height:52px;">명단</div>
<div class="a t " style="left:1587px;top:1154px;width:340px;height:52px;line-height:52px;">담임/강의실</div>
<div class="a t " style="left:1927px;top:1154px;width:166px;height:52px;line-height:52px;">시작일</div>
<div class="a t " style="left:2093px;top:1154px;width:166px;height:52px;line-height:52px;">종료일</div>
<div class="a t " style="left:2259px;top:1154px;width:136px;height:52px;line-height:52px;">상태</div>
<div class="a t " style="left:2395px;top:1154px;width:166px;height:52px;line-height:52px;">복학예정일</div>
</div></div>
<svg class="a" style="left:0;top:491px" width="160" height="72" viewBox="0 0 160 72"><defs><linearGradient id="ag" gradientUnits="userSpaceOnUse" x1="0" y1="0" x2="150" y2="0"><stop offset="0" stop-color="#d8381a"/><stop offset="0.39" stop-color="#d8381a"/><stop offset="0.40" stop-color="#ee9a86"/><stop offset="0.85" stop-color="#dc3f1f"/><stop offset="1" stop-color="#dc3f1f"/></linearGradient><linearGradient id="ah" gradientUnits="userSpaceOnUse" x1="116" y1="0" x2="150" y2="0"><stop offset="0" stop-color="#e6522d"/><stop offset="1" stop-color="#d4310e"/></linearGradient></defs><path d="M0 35 L146 35" stroke="url(#ag)" stroke-width="8" fill="none"/><path d="M120 10 L147 35 L120 61" stroke="url(#ah)" stroke-width="8.5" fill="none" stroke-linecap="round" stroke-linejoin="round"/></svg>
</div>
</body>
</html>
